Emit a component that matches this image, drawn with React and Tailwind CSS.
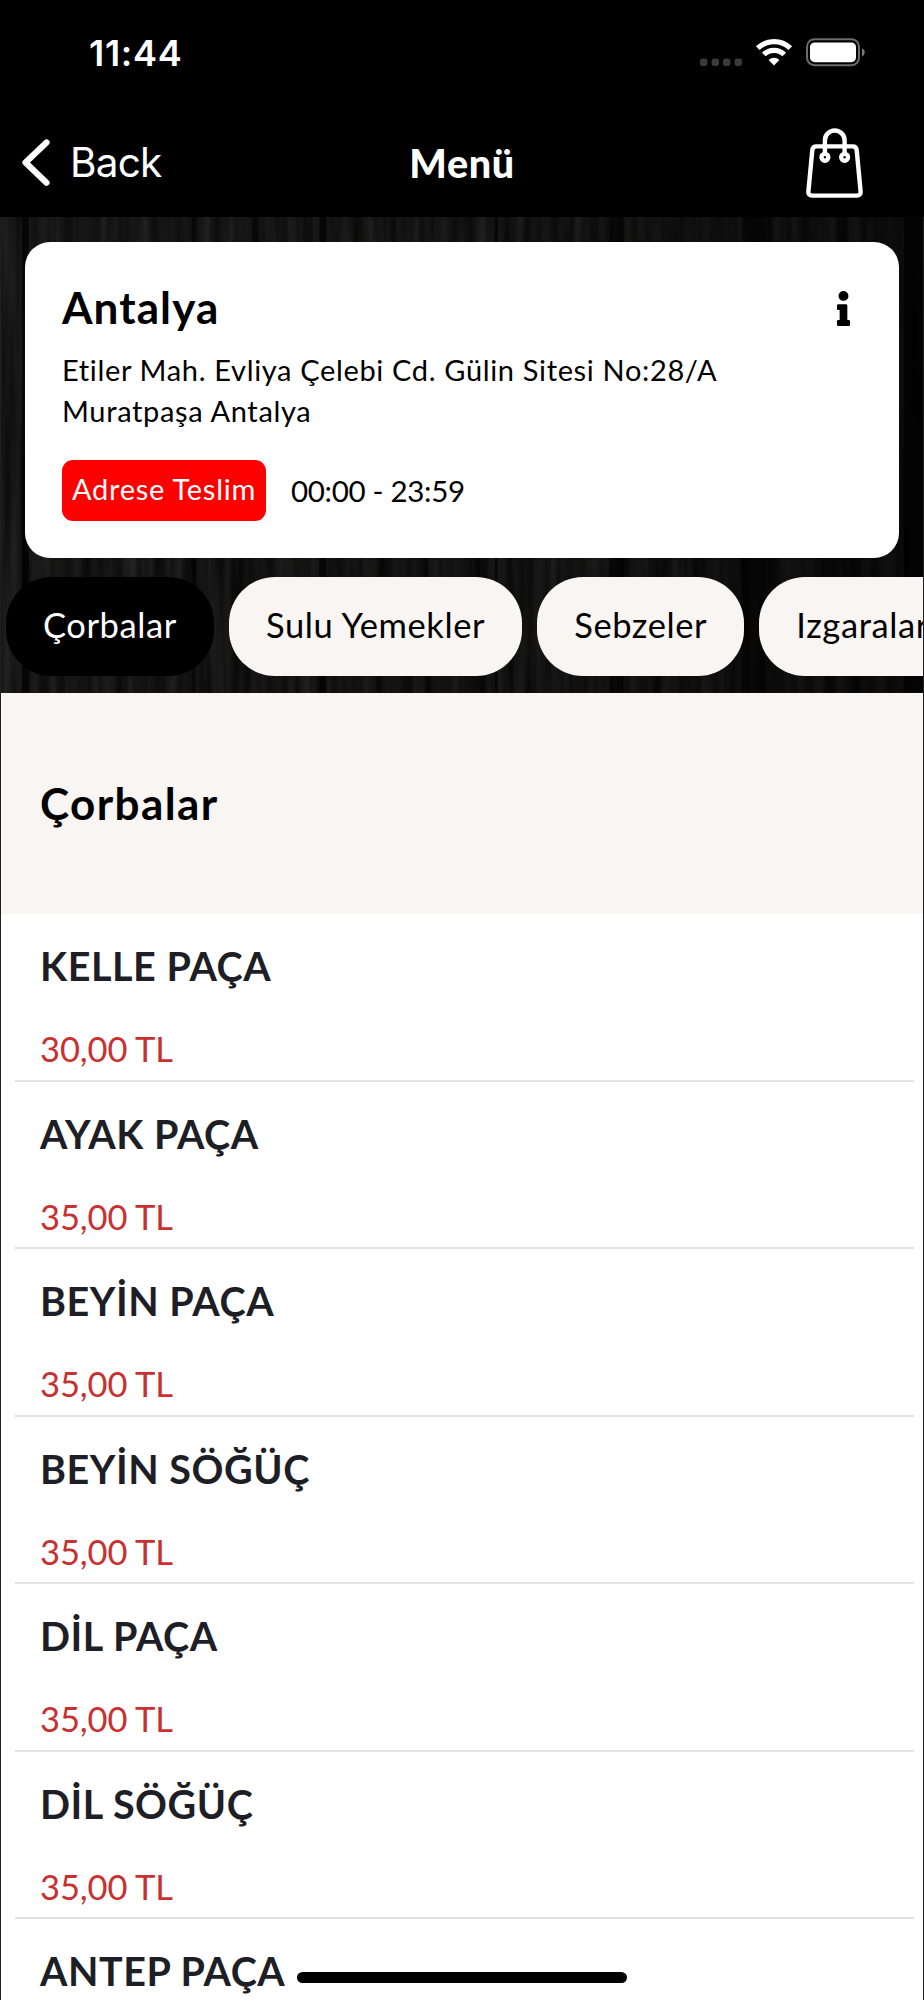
import React, { useState } from "react";
import { FaInfo } from "react-icons/fa";
import clsx from "clsx";

const categories = ["Çorbalar", "Sulu Yemekler", "Sebzeler", "Izgaralar"];

const products = [
  { id: 1, name: "KELLE PAÇA", price: "30,00 TL" },
  { id: 2, name: "AYAK PAÇA", price: "35,00 TL" },
  { id: 3, name: "BEYİN PAÇA", price: "35,00 TL" },
  { id: 4, name: "BEYİN SÖĞÜÇ", price: "35,00 TL" },
  { id: 5, name: "DİL PAÇA", price: "35,00 TL" },
  { id: 6, name: "DİL SÖĞÜÇ", price: "35,00 TL" },
  { id: 7, name: "ANTEP PAÇA" },
];

// dark gaps between the planks: [x, width, opacity]
const seams = [
  [21, 7, 0.7],
  [191, 4, 0.6],
  [319, 7, 0.7],
  [495, 3, 0.6],
  [610, 14, 0.6],
  [742, 24, 0.6],
  [905, 19, 0.7],
];

function StatusBar() {
  return (
    <div className="flex h-[106px] items-start justify-between pl-[89px] pr-[58px] pt-[31px] text-white">
      <span className="font-['Inter',sans-serif] text-[36px] font-semibold leading-[44px] tracking-[0.7px]">
        11:44
      </span>
      <svg width="168" height="30" viewBox="0 0 168 30" className="mt-[6px]">
        <g fill="#3a3a3a">
          <rect x="2" y="21.5" width="7.4" height="7.4" rx="2.6" />
          <rect x="13.6" y="21.5" width="7.4" height="7.4" rx="2.6" />
          <rect x="25" y="21.5" width="7.4" height="7.4" rx="2.6" />
          <rect x="36.6" y="21.5" width="7.4" height="7.4" rx="2.6" />
        </g>
        <g fill="none" stroke="#fff" strokeWidth="5.2">
          <path d="M59.7 11.2a23.4 23.4 0 0 1 32.6 0" />
          <path d="M65.8 17.5a14.6 14.6 0 0 1 20.4 0" />
        </g>
        <path d="M76 28.6l-5.4-5.6a7.9 7.9 0 0 1 10.8 0z" fill="#fff" />
        <rect x="109" y="2.2" width="52" height="26" rx="7.5" fill="none" stroke="#6b6b6b" strokeWidth="2" />
        <rect x="112" y="5.4" width="46" height="19.8" rx="4.6" fill="#fff" />
        <path d="M164 11.2c3.6 1.4 3.6 6.8 0 8.2z" fill="#7a7a7a" />
      </svg>
    </div>
  );
}

function BagIcon() {
  return (
    <svg width="60" height="72" viewBox="0 0 60 72" fill="none" stroke="#fff" strokeWidth="4.4" strokeLinejoin="round">
      <path d="M12.4 19.4h36.2c2.5 0 3.9 1.5 4.1 3.8l3.9 41c.3 2.8-1 4.4-3.6 4.4H8c-2.6 0-3.900-1.600-3.600-4.400l3.900-41c.2-2.300 1.600-3.800 4.100-3.800z" />
      <path d="M20.900 27V13.300a9.850 9.850 0 0 1 19.700 0V27" />
      <circle cx="20.900" cy="30.300" r="3.400" fill="#000" />
      <circle cx="40.600" cy="30.300" r="3.400" fill="#000" />
    </svg>
  );
}

function NavBar() {
  return (
    <div className="grid h-[111px] grid-cols-3 items-start text-white">
      <div className="flex items-center pl-[21px] pt-[33px]">
        <svg width="30" height="48" viewBox="0 0 30 48" fill="none" stroke="#fff" strokeWidth="6.2" strokeLinecap="round" strokeLinejoin="round">
          <path d="M25.500 3.500L4.500 23.600L25.500 43.700" />
        </svg>
        <span className="ml-[19px] font-['Inter',sans-serif] text-[40.500px] font-normal leading-[48px] tracking-[-0.8px]">
          Back
        </span>
      </div>
      <h1 className="pt-[33px] text-center text-[39.500px] font-black leading-[48px] tracking-[0.6px]">Menü</h1>
      <div className="flex justify-end pr-[60px] pt-[21px]">
        <BagIcon />
      </div>
    </div>
  );
}

function WoodBackground() {
  return (
    <svg className="absolute inset-0 h-full w-full" viewBox="0 0 924 475" preserveAspectRatio="none">
      <defs>
        <filter id="grain" x="0" y="0" width="100%" height="100%" colorInterpolationFilters="sRGB">
          <feTurbulence type="fractalNoise" baseFrequency="0.08 0.004" numOctaves="3" seed="7" />
          <feColorMatrix
            values="0.18 0 0 0 -0.008
                    0.18 0 0 0 -0.008
                    0.18 0 0 0 -0.009
                    0 0 0 0 1"
          />
        </filter>
        <linearGradient id="shade" x1="0" y1="0" x2="1" y2="0">
          <stop offset="0" stopColor="#000" stopOpacity="0" />
          <stop offset="0.6" stopColor="#000" stopOpacity="0.15" />
          <stop offset="1" stopColor="#000" stopOpacity="0.5" />
        </linearGradient>
      </defs>
      <rect width="924" height="475" fill="#141414" />
      <rect width="924" height="475" filter="url(#grain)" />
      <rect width="924" height="475" fill="url(#shade)" />
      {seams.map(([x, width, opacity]) => (
        <rect key={x} x={x} y="0" width={width} height="475" fill="#000" opacity={opacity} />
      ))}
    </svg>
  );
}

function BranchCard() {
  return (
    <div className="mx-[24px] h-[316px] rounded-[25px] bg-white px-[37px] pt-[38px] text-black">
      <div className="flex items-start justify-between">
        <h2 className="text-[44px] font-bold leading-[54px] tracking-[1.100px]">Antalya</h2>
        <FaInfo size={35} className="mr-[1px] mt-[11px]" />
      </div>
      <p className="mt-[16px] text-[29px] leading-[40.500px] tracking-[0.66px]">
        Etiler Mah. Evliya Çelebi Cd. Gülin Sitesi No:28/A
        <br />
        Muratpaşa Antalya
      </p>
      <div className="mt-[29px] flex items-center">
        <span className="flex h-[61px] w-[204px] items-center justify-center rounded-[11px] bg-[#ff0000] pb-[3px] text-[29px] leading-[40px] tracking-[0.75px] text-white">
          Adrese Teslim
        </span>
        <span className="ml-[25px] text-[29.500px] leading-[40px] tracking-[-0.3px]">00:00 - 23:59</span>
      </div>
    </div>
  );
}

function CategoryTabs({ active, onSelect }) {
  return (
    <div className="mt-[19px] flex gap-[15px] overflow-hidden pl-[5px]">
      {categories.map((category) => (
        <button
          key={category}
          onClick={() => onSelect(category)}
          className={clsx(
            "h-[99px] shrink-0 whitespace-nowrap rounded-[46px] px-[37px] pb-[3px] text-[34.500px] tracking-[0.6px]",
            category === active ? "bg-black text-white" : "bg-[#f9f5f2] text-black"
          )}
        >
          {category}
        </button>
      ))}
    </div>
  );
}

function ProductRow({ name, price }) {
  return (
    <div className="ml-[14px] mr-[9px] h-[167.500px] shrink-0 border-b-2 border-[#e2e2e2] pl-[25px] pt-[28.400px]">
      <h3 className="text-[39.500px] font-bold leading-[48px] tracking-[0.55px] text-[#1e1e26]">{name}</h3>
      {price && <p className="mt-[39px] text-[34.500px] leading-[40px] tracking-[-0.1px] text-[#c93030]">{price}</p>}
    </div>
  );
}

export default function App() {
  const [active, setActive] = useState("Çorbalar");

  return (
    <div className="relative flex h-[2000px] w-[924px] flex-col overflow-hidden bg-black font-['Lato',sans-serif]">
      <StatusBar />
      <NavBar />

      <div className="flex min-h-0 flex-1 flex-col border-x border-[#1f1f22] bg-white">
        {/* Branch info over the wood backdrop */}
        <div className="relative h-[475.500px] shrink-0 bg-black">
          <WoodBackground />
          <div className="relative pt-[25px]">
            <BranchCard />
            <CategoryTabs active={active} onSelect={setActive} />
          </div>
        </div>

        {/* Section title */}
        <div className="flex h-[221.500px] shrink-0 items-center bg-[#f9f5f2] pl-[39px]">
          <h2 className="text-[44px] font-bold leading-[54px] tracking-[1.400px] text-black">{active}</h2>
        </div>

        {products.map((product) => (
          <ProductRow key={product.id} name={product.name} price={product.price} />
        ))}
      </div>

      {/* Home indicator */}
      <div className="absolute bottom-[17px] left-[297px] h-[11px] w-[330px] rounded-full bg-black" />
    </div>
  );
}
